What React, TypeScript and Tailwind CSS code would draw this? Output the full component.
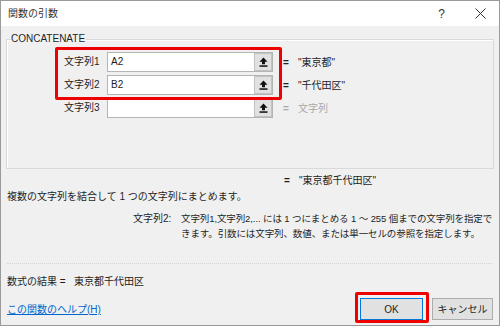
import React from 'react';

const font = { fontFamily: '"Liberation Sans", "Noto Sans CJK JP", sans-serif' };

const RefIcon: React.FC = () => (
  <svg width="9" height="10" viewBox="0 0 9 10">
    <path d="M4.5 0.5 L8.5 4.8 H6 V7.2 H3 V4.8 H0.5 Z" fill="#111" />
    <rect x="0.5" y="8.3" width="8" height="1.5" fill="#111" />
  </svg>
);

type Arg = { label: string; value: string; result: string; empty?: boolean };

const args: Arg[] = [
  { label: '文字列1', value: 'A2', result: '"東京都"' },
  { label: '文字列2', value: 'B2', result: '"千代田区"' },
  { label: '文字列3', value: '', result: '文字列', empty: true },
];

const ArgRow: React.FC<{ arg: Arg }> = ({ arg }) => (
  <div className="flex items-center h-[20px]">
    <span className="w-[43px] leading-[14px]">{arg.label}</span>
    <div className="flex w-[166px] h-[20px] bg-white border border-[#b5b5b5]">
      <span className="flex-1 pl-[3px] leading-[18px]">{arg.value}</span>
      <div className="w-[18px] h-full flex items-center justify-center bg-[#e1e1e1] border border-[#c2c2c2]">
        <RefIcon />
      </div>
    </div>
    <span className={`ml-[10px] w-[15px] font-bold ${arg.empty ? 'text-[#a8a8a8]' : ''}`}>=</span>
    <span className={arg.empty ? 'text-[#a8a8a8]' : ''}>{arg.result}</span>
  </div>
);

const App: React.FC = () => {
  return (
    <div
      style={font}
      className="relative w-[500px] h-[326px] flex flex-col border border-[#9a9a9a] bg-[#f0f0f0] text-[10px] text-[#1e1e1e] overflow-hidden"
    >
      {/* title bar */}
      <div className="h-[25px] bg-white flex items-center pl-[7px] pr-[13px]">
        <span className="text-[10px] text-[#333]">関数の引数</span>
        <span className="ml-auto text-[12px] text-[#333] mr-[30px]">?</span>
        <svg width="11" height="11" viewBox="0 0 11 11">
          <path d="M0.5 0.5 L10.5 10.5 M10.5 0.5 L0.5 10.5" stroke="#333" strokeWidth="1" />
        </svg>
      </div>

      <div className="flex-1 flex flex-col px-[5px]">
        <fieldset className="mt-[7px] h-[136px] border border-[#d9d9d9] shadow-[inset_1px_1px_0_#ffffff]">
          <legend className="ml-[3px] px-[1px] leading-[12px] text-[10px]">CONCATENATE</legend>
          <div className="flex flex-col gap-[3px] pl-[57px] pt-[7px]">
            {args.map((a) => (
              <ArgRow key={a.label} arg={a} />
            ))}
          </div>
        </fieldset>

        <div className="mt-[5px] h-[14px] leading-[14px] pl-[278px]">
          <span className="font-bold inline-block w-[15px]">=</span>"東京都千代田区"
        </div>
        <div className="mt-[2px] h-[14px] leading-[14px] pl-[1px]">
          複数の文字列を結合して 1 つの文字列にまとめます。
        </div>

        <div className="mt-[7px] flex leading-[15px]">
          <span className="ml-[127px] w-[48px] shrink-0 whitespace-nowrap">文字列2:</span>
          <span className="whitespace-nowrap text-[9.5px] tracking-[-0.1px]">
            文字列1,文字列2,... には 1 つにまとめる 1 ～ 255 個までの文字列を指定で
            <br />
            きます。引数には文字列、数値、または単一セルの参照を指定します。
          </span>
        </div>

        <div className="mt-[22px] mx-[1px] border-t border-dotted border-[#d4d4d4]" />

        <div className="mt-[11px] h-[14px] leading-[14px] pl-[1px]">
          数式の結果 = &nbsp;&nbsp;東京都千代田区
        </div>

        <div className="mt-[9px] flex items-center">
          <span className="pl-[1px] text-[#0066cc] underline">この関数のヘルプ(H)</span>
          <button className="ml-auto w-[63px] h-[22px] bg-[#e1e1e1] border border-[#0078d7] text-[10px]">
            OK
          </button>
          <button className="ml-[9px] mr-[1px] w-[61px] h-[22px] bg-[#e1e1e1] border border-[#adadad] text-[10px]">
            キャンセル
          </button>
        </div>
      </div>

      {/* red annotation frames */}
      <div className="absolute left-[54px] top-[46px] w-[227px] h-[53px] border-[3px] border-[#ee0000] rounded-[2px] pointer-events-none" />
      <div className="absolute left-[354px] top-[291px] w-[74px] h-[31px] border-[3px] border-[#ee0000] rounded-[2px] pointer-events-none" />
    </div>
  );
};

export default App;
